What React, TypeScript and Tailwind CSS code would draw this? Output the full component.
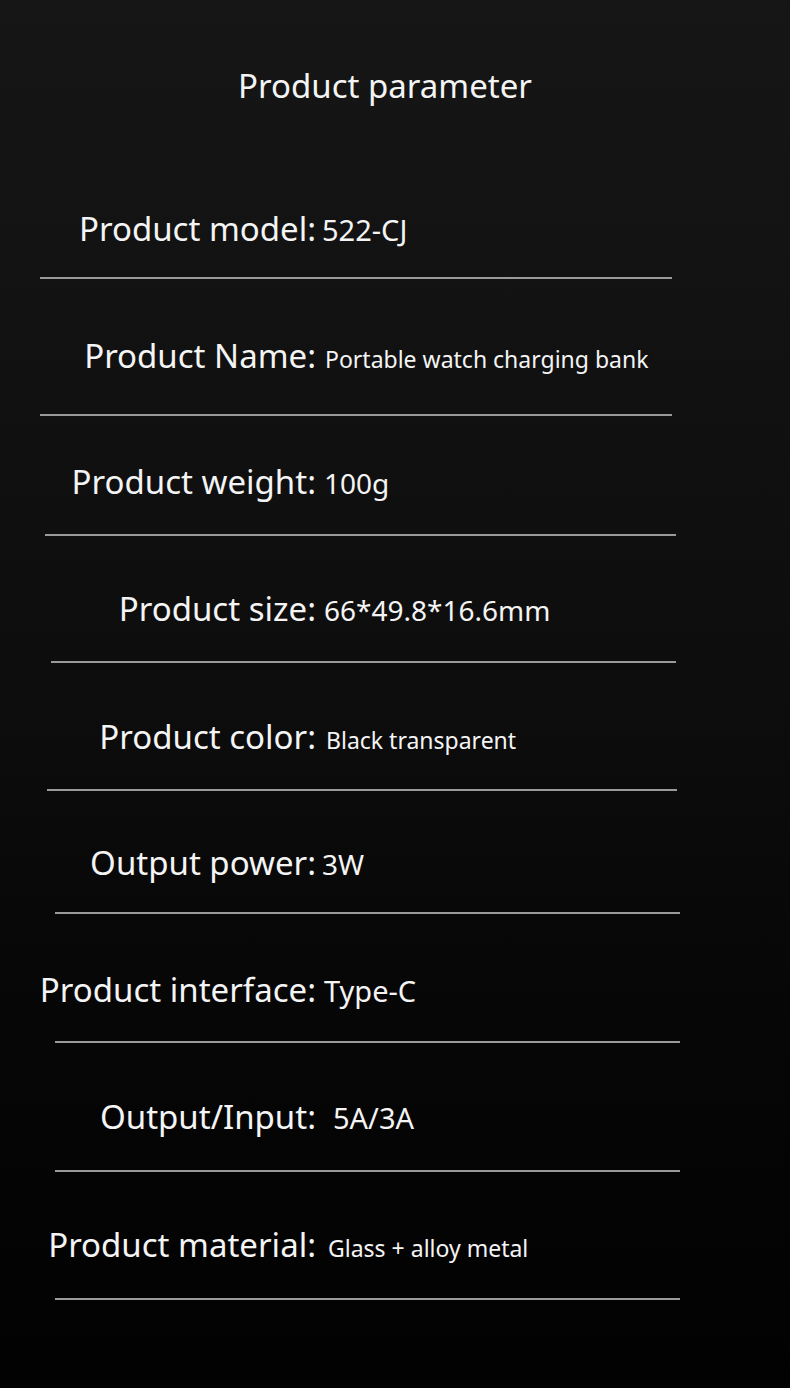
type ParamRow = {
  label: string
  value: string
  rowClass: string
  valueClass: string
  lineClass: string
}

const rows: ParamRow[] = [
  {
    label: 'Product model:',
    value: '522-CJ',
    rowClass: 'mt-[99px]',
    valueClass: 'ml-[6px] text-[29px]',
    lineClass: 'mt-[26px] ml-[40px] w-[632px]',
  },
  {
    label: 'Product Name:',
    value: 'Portable watch charging bank',
    rowClass: 'mt-[55px]',
    valueClass: 'ml-[9px] text-[23px]',
    lineClass: 'mt-[36px] ml-[40px] w-[632px]',
  },
  {
    label: 'Product weight:',
    value: '100g',
    rowClass: 'mt-[44px]',
    valueClass: 'ml-[8px] text-[28px]',
    lineClass: 'mt-[30px] ml-[45px] w-[631px]',
  },
  {
    label: 'Product size:',
    value: '66*49.8*16.6mm',
    rowClass: 'mt-[51px]',
    valueClass: 'ml-[8px] text-[28px]',
    lineClass: 'mt-[30px] ml-[51px] w-[625px]',
  },
  {
    label: 'Product color:',
    value: 'Black transparent',
    rowClass: 'mt-[52px]',
    valueClass: 'ml-[10px] text-[23px]',
    lineClass: 'mt-[30px] ml-[47px] w-[630px]',
  },
  {
    label: 'Output power:',
    value: '3W',
    rowClass: 'mt-[50px]',
    valueClass: 'ml-[6px] text-[28px]',
    lineClass: 'mt-[27px] ml-[55px] w-[625px]',
  },
  {
    label: 'Product interface:',
    value: 'Type-C',
    rowClass: 'mt-[54px]',
    valueClass: 'ml-[8px] text-[29px]',
    lineClass: 'mt-[29px] ml-[55px] w-[625px]',
  },
  {
    label: 'Output/Input:',
    value: '5A/3A',
    rowClass: 'mt-[52px]',
    valueClass: 'ml-[17px] text-[29px]',
    lineClass: 'mt-[31px] ml-[55px] w-[625px]',
  },
  {
    label: 'Product material:',
    value: 'Glass + alloy metal',
    rowClass: 'mt-[51px]',
    valueClass: 'ml-[12px] text-[23px]',
    lineClass: 'mt-[31px] ml-[55px] w-[625px]',
  },
]

export default function App() {
  return (
    <div
      className="flex h-[1388px] w-[790px] flex-col overflow-hidden bg-gradient-to-b from-[#161616] via-[#0d0d0d] to-[#020202] text-[#f4f4f4]"
      style={{ fontFamily: '"Noto Sans", "Open Sans", sans-serif' }}
    >
      <h1 className="mt-[64px] h-[44px] pr-[20px] text-center text-[33px] leading-[44px] font-normal">
        Product parameter
      </h1>

      {rows.map((row) => (
        <div key={row.label} className="flex flex-col">
          <div className={`flex h-[44px] items-baseline leading-[44px] ${row.rowClass}`}>
            <span className="w-[316px] shrink-0 text-right text-[33px]">{row.label}</span>
            <span className={`whitespace-nowrap ${row.valueClass}`}>{row.value}</span>
          </div>
          <div className={`h-[2px] bg-[#9a9a9a] ${row.lineClass}`} />
        </div>
      ))}
    </div>
  )
}
